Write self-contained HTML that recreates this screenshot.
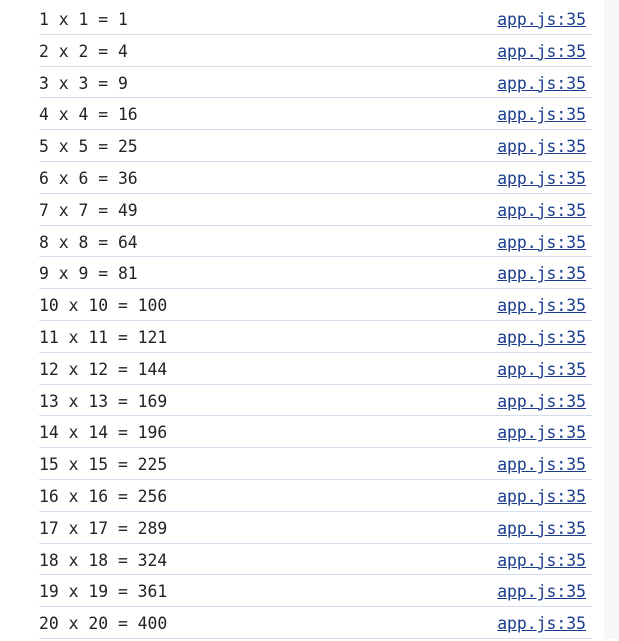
<!DOCTYPE html>
<html><head><style>
html,body{margin:0;padding:0;width:619px;height:639px;overflow:hidden;background:#fff;}
.sb{position:absolute;left:604px;top:0;width:15px;height:639px;background:#f7f7f7;}
.list{position:absolute;left:39px;top:3px;width:553px;}
.row{height:30.8px;border-bottom:1px solid #d3dfee;position:relative;font-family:"DejaVu Sans Mono","Liberation Mono",monospace;font-size:16.4px;line-height:34px;color:#222;}
.row span{white-space:pre;}
.row a{position:absolute;right:6px;top:0;color:#1a3c8c;text-decoration:underline;}
</style></head><body>
<div class="list">
<div class="row"><span>1 x 1 = 1</span><a>app.js:35</a></div>
<div class="row"><span>2 x 2 = 4</span><a>app.js:35</a></div>
<div class="row"><span>3 x 3 = 9</span><a>app.js:35</a></div>
<div class="row"><span>4 x 4 = 16</span><a>app.js:35</a></div>
<div class="row"><span>5 x 5 = 25</span><a>app.js:35</a></div>
<div class="row"><span>6 x 6 = 36</span><a>app.js:35</a></div>
<div class="row"><span>7 x 7 = 49</span><a>app.js:35</a></div>
<div class="row"><span>8 x 8 = 64</span><a>app.js:35</a></div>
<div class="row"><span>9 x 9 = 81</span><a>app.js:35</a></div>
<div class="row"><span>10 x 10 = 100</span><a>app.js:35</a></div>
<div class="row"><span>11 x 11 = 121</span><a>app.js:35</a></div>
<div class="row"><span>12 x 12 = 144</span><a>app.js:35</a></div>
<div class="row"><span>13 x 13 = 169</span><a>app.js:35</a></div>
<div class="row"><span>14 x 14 = 196</span><a>app.js:35</a></div>
<div class="row"><span>15 x 15 = 225</span><a>app.js:35</a></div>
<div class="row"><span>16 x 16 = 256</span><a>app.js:35</a></div>
<div class="row"><span>17 x 17 = 289</span><a>app.js:35</a></div>
<div class="row"><span>18 x 18 = 324</span><a>app.js:35</a></div>
<div class="row"><span>19 x 19 = 361</span><a>app.js:35</a></div>
<div class="row"><span>20 x 20 = 400</span><a>app.js:35</a></div>
</div>
<div class="sb"></div>
</body></html>
